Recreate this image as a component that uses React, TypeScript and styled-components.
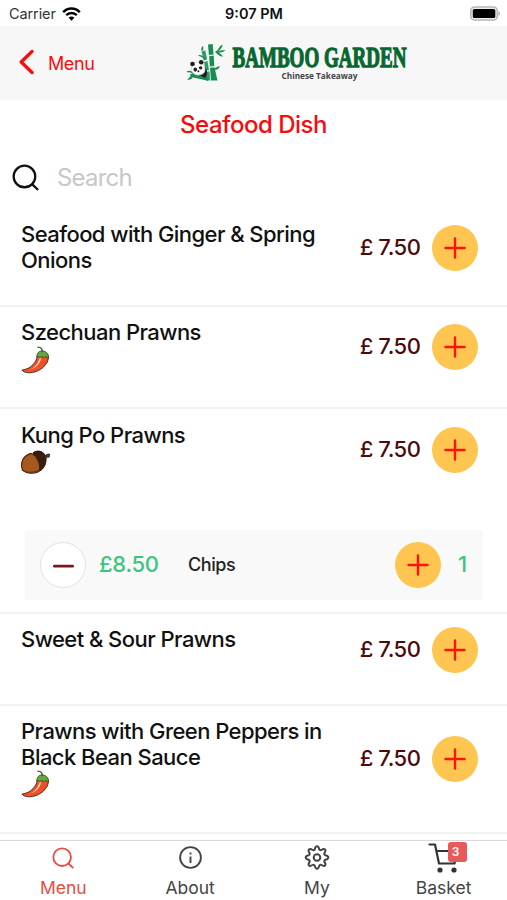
import React from 'react';
import styled, { createGlobalStyle } from 'styled-components';

const GlobalStyle = createGlobalStyle`
  * { box-sizing: border-box; }
  body { margin: 0; background: #fff; font-family: Inter, "Liberation Sans", sans-serif; color: #111; }
  button, input { font: inherit; border: 0; padding: 0; background: none; }
`;

const Screen = styled.div`
  width: 507px;
  height: 900px;
  display: flex;
  flex-direction: column;
  overflow: hidden;
  background: #fff;
`;

const StatusBar = styled.header`
  flex: none;
  height: 26px;
  padding: 0 7px 0 9px;
  display: grid;
  grid-template-columns: 1fr auto 1fr;
  align-items: center;
  font-size: 14.5px;
  line-height: 26px;
`;

const Carrier = styled.div`
  display: flex;
  align-items: center;
  gap: 6px;
  color: #333;
  letter-spacing: -0.1px;
`;

const Clock = styled.div`
  padding-top: 1px;
  margin-left: -1px;
  font-weight: 600;
  font-size: 14.5px;
`;

const BatterySlot = styled.div`
  display: flex;
  justify-content: flex-end;
`;

const NavBar = styled.nav`
  flex: none;
  height: 74px;
  display: flex;
  align-items: center;
  padding: 0 12px 0 19px;
  background: #f7f7f7;
`;

const BackButton = styled.button`
  display: flex;
  align-items: center;
  gap: 14px;
  width: 167px;
  color: #fb0d0d;
  font-size: 18px;
  letter-spacing: -0.4px;
  svg { margin-top: -3px; }
`;

const Title = styled.h1`
  flex: none;
  margin: 0;
  height: 49px;
  line-height: 49px;
  text-align: center;
  font-size: 24px;
  font-weight: 450;
  letter-spacing: -0.5px;
  color: #f70b0b;
`;

const SearchBar = styled.label`
  flex: none;
  height: 56px;
  display: flex;
  align-items: center;
  gap: 18px;
  padding-left: 12px;
`;

const SearchInput = styled.input`
  width: 300px;
  outline: none;
  font-size: 24px;
  letter-spacing: -0.8px;
  &::placeholder { color: #c7c7c9; opacity: 1; }
`;

const List = styled.main`
  flex: none;
  height: 635px;
  overflow: hidden;
`;

const Item = styled.section<{ $height: number; $top: number }>`
  height: ${p => p.$height}px;
  padding: ${p => p.$top}px 24px 0 21px;
  border-bottom: 2px solid #f1f1f1;
`;

const ItemMain = styled.div`
  display: flex;
  align-items: center;
  padding-right: 5.5px;
`;

const ItemInfo = styled.div`
  align-self: flex-start;
  flex: 1;
`;

const ItemName = styled.h2`
  margin: 0;
  font-size: 22px;
  line-height: 25.5px;
  font-weight: 500;
  letter-spacing: -0.55px;
  white-space: pre-line;
`;

const Tag = styled.div`
  height: 29px;
  margin-left: -1px;
  svg { display: block; }
`;

const Price = styled.span`
  margin: -2px 11px 0 0;
  color: #4d0a0c;
  font-size: 22px;
  font-weight: 500;
  letter-spacing: -0.45px;
  white-space: nowrap;
`;

const RoundButton = styled.button<{ $plain?: boolean }>`
  flex: none;
  display: grid;
  place-items: center;
  width: 46px;
  height: 46px;
  border-radius: 50%;
  background: ${p => (p.$plain ? '#fff' : '#fec550')};
  border: ${p => (p.$plain ? '1.5px solid #e3e3e3' : '0')};
`;

const Selection = styled.div`
  display: flex;
  align-items: center;
  height: 70px;
  margin: 52px 0 0 4px;
  padding: 0 15px;
  background: #f9f9f9;
  color: #3dc57d;
  font-size: 22px;
  font-weight: 450;
`;

const SelectionPrice = styled.span`
  width: 89px;
  margin: -2px 0 0 13px;
  letter-spacing: -0.3px;
`;

const SelectionName = styled.span`
  flex: 1;
  color: #222;
  font-size: 18px;
  letter-spacing: -0.4px;
`;

const Quantity = styled.span`
  width: 27px;
  margin-top: -2px;
  padding-left: 17px;
  font-weight: 500;
`;

const TabBar = styled.footer`
  flex: none;
  height: 60px;
  display: grid;
  grid-template-columns: repeat(4, 1fr);
  border-top: 1px solid #d9d9d9;
  background: #fff;
`;

const Tab = styled.button<{ $active?: boolean }>`
  display: flex;
  flex-direction: column;
  align-items: center;
  color: ${p => (p.$active ? '#eb4b43' : '#444')};
  font-size: 17.5px;
  line-height: 25px;
`;

const TabIcon = styled.span`
  position: relative;
  height: 34px;
  display: grid;
  place-items: center;
`;

const Badge = styled.span`
  position: absolute;
  top: 1px;
  left: 20px;
  width: 19px;
  height: 20px;
  border-radius: 3px;
  background: #e65a5a;
  color: #fff;
  text-align: center;
  padding-right: 3px;
  font-size: 12px;
  font-weight: 600;
  line-height: 20px;
`;

const Plus = () => (
  <svg width="22" height="22" viewBox="0 0 22 22" stroke="#ff1208" strokeWidth="2.4" strokeLinecap="round">
    <path d="M1.5 11h19M11 1.5v19" />
  </svg>
);

const Minus = () => (
  <svg width="22" height="22" viewBox="0 0 22 22" stroke="#761a1e" strokeWidth="2.8" strokeLinecap="round">
    <path d="M2.4 12.2h18.2" />
  </svg>
);

const Magnifier = ({ size, weight }: { size: number; weight: number }) => (
  <svg width={size} height={size} viewBox="0 0 26 26" fill="none" stroke="currentColor" strokeWidth={weight} strokeLinecap="round">
    <circle cx="12" cy="12" r="10.4" />
    <path d="M19.800 19.800l4.700 4.500" />
  </svg>
);

const Wifi = () => (
  <svg width="19" height="14" viewBox="0 0 19 14" fill="none" stroke="#000" strokeWidth="2.4">
    <path d="M1.2 5.2C5.6.2 13.4.2 17.8 5.2" />
    <path d="M4.2 8.2c3-3 7.6-3 10.6 0" />
    <path d="M6.6 10.7c1.7-1.5 4.1-1.5 5.8 0L9.5 13.8z" fill="#000" stroke="none" />
  </svg>
);

const Battery = () => (
  <svg width="31" height="15" viewBox="0 0 31 15">
    <rect x="1.800" y="1" width="26.5" height="13" rx="3.8" fill="#eee" stroke="#b8b8b8" strokeWidth="1.6" />
    <rect x="3.800" y="3" width="22.5" height="9" rx="1.6" fill="#000" />
    <path d="M29.500 5.2c2 .8 2 3.8 0 4.6z" fill="#aaa" />
  </svg>
);

const Chili = () => (
  <svg width="30" height="30" viewBox="0 0 30 30" strokeLinejoin="round" strokeLinecap="round">
    <path d="M17.8 9.2c-1.5 7-6.3 13.600-15.800 14.900 1.800 2.700 7.300 3.400 12.300 2C22.600 23.700 29.500 16.800 28.300 9.700z" fill="#f25022" stroke="#4a3029" strokeWidth="1" />
    <path d="M19.800 11.800c-1.600 5.800-4.700 9.500-9.800 12 5-1.500 9.400-5 11-11z" fill="#fff" opacity=".85" />
    <path d="M16.800 10.800c.2-4.200 2.600-6.200 6-5.900 3.400.4 6 2.900 5.500 7.200-1.700-1.700-3.500-1.700-4.700-.2-1.200-1.900-2.600-1.800-3.700-.2-.9-1.200-1.900-1.500-3.100-.9z" fill="#65a83a" stroke="#36502a" strokeWidth=".9" />
    <path d="M22.400 5c-.2-2-1.800-3.500-4.500-3.800" fill="none" stroke="#3f5336" strokeWidth="1.300" />
  </svg>
);

const Acorn = () => (
  <svg width="31" height="28" viewBox="0 0 31 28" strokeLinejoin="round">
    <g transform="translate(0 -.8)">
      <path d="M13 4.700C17.700.9 25 3.400 25.900 9.500c.8 5.200-1.800 11.300-6.500 13.500z" fill="#3b1d0e" stroke="#1f120b" />
      <path d="M24.800 8.200c1.300-1.900 2.700-2.700 5-2.200l-.6 3.100c-1.500-.6-2.500.2-3.400 1.700z" fill="#493728" stroke="#241b14" strokeWidth=".7" />
      <path d="M11.200 5.200C16 6.800 21 14.500 19.300 22.300c-1 2.100-4.200 2.800-8.200 2.700-3.700-.2-6.500-1.100-8.700-3.200C-.2 13.500 3.300 7.600 11.200 5.200z" fill="#a6581e" stroke="#3a2112" strokeWidth="1.100" />
      <path d="M3 22c4.500 2 11.500 2 15.600-.9-.8 3-4.500 4-8.100 3.700C7.300 24.600 4.600 23.700 3 22z" fill="#763811" />
    </g>
  </svg>
);

const Info = () => (
  <svg width="24" height="24" viewBox="0 0 24 24" fill="none" stroke="currentColor" strokeWidth="1.900">
    <circle cx="12.500" cy="11.500" r="10.400" />
    <path d="M12.500 10.500V17M12.500 6.500v2" />
  </svg>
);

const Gear = () => (
  <svg width="26" height="26" viewBox="0 0 26 26" fill="none" stroke="currentColor" strokeWidth="2" strokeLinejoin="round">
    <g transform="translate(0 -.5)">
      <circle cx="13" cy="13" r="3.300" />
      <path d="M10.800 4.600C11.300 2.400 12 1.700 13 1.700s1.700.7 2.200 2.900c.3 1 1.300 1.400 2.200.9 1.900-1.200 2.900-1.200 3.600-.5s.7 1.700-.5 3.600c-.5.9-.1 1.900.9 2.200 2.200.5 2.900 1.200 2.900 2.200s-.7 1.700-2.900 2.200c-1 .3-1.400 1.300-.9 2.200 1.200 1.900 1.200 2.900.5 3.600s-1.700.7-3.600-.5c-.9-.5-1.900-.1-2.200.9-.5 2.200-1.200 2.900-2.200 2.900s-1.700-.7-2.200-2.900c-.3-1-1.300-1.400-2.200-.9-1.900 1.200-2.900 1.200-3.600.5s-.7-1.700.5-3.600c.5-.9.1-1.900-.9-2.200C2.400 14.700 1.700 14 1.700 13s.7-1.700 2.900-2.200c1-.3 1.400-1.300.9-2.200C4.300 6.700 4.300 5.700 5 5s1.700-.7 3.600.5c.9.5 1.900.1 2.200-.9z" />
    </g>
  </svg>
);

const Cart = () => (
  <svg width="32" height="32" viewBox="0 0 32 32" fill="none" stroke="#333" strokeWidth="2.200" strokeLinecap="round" strokeLinejoin="round">
    <path d="M1.500 2.500h5.500L11 21.500h15.500l3-12.500H8.500" />
    <circle cx="12" cy="28" r="2.600" fill="#333" stroke="none" />
    <circle cx="26" cy="28" r="2.600" fill="#333" stroke="none" />
  </svg>
);

const Logo = () => (
  <svg width="232" height="42" viewBox="0 0 232 42" aria-label="Bamboo Garden">
    <g fill="#169052">
      <path d="M22 2.500l4.700-.5.800 10.500-4.600.6zM23.200 14.200l4.500-.6.600 10.500-4.500.5zM24 25.800l4.500-.5 3 13.200H25z" />
      <path d="M15.500 9.500l3.700-1.200 2 9.200-3.500 1zM18 20l3.500-1 1.500 9-3.400.7zM20 30l3.400-.7.800 9.200H20z" opacity=".9" />
      <path d="M4 32.500l4-2 14 5v3.300L5 35z" />
      <path d="M29 10c3.500-1.500 4-6 7.500-7.500-.2 3-1.700 5-4.200 6.500 3.200-1.200 4.700-.4 7.200-1-2.500 2.600-6 2.700-8 2.200 3 .8 4.200 2.400 5.300 4.600C33.500 14.500 32 12.500 29 10zM18 17c-3-3-5-2.500-6-4 3-.6 6 1 7 4zM15.500 9c-.5-3 0-4 1.500-5 .8 2 .4 4-1 5zM28 27c3-3 5-2 6-3-1 3-3 4-6 4zM6 31c-3-1-4 0-5.500-1.500 3-1.700 6-.5 7 1.500zM6 34c-3 .3-3 3-5 3.500 3 .8 5.500-.6 6-3.500z" />
    </g>
    <circle cx="12" cy="26.500" r="6.700" fill="#fff" stroke="#aaa" strokeWidth=".4" />
    <g fill="#202020">
      <circle cx="6.500" cy="22" r="2.300" />
      <circle cx="15.200" cy="20.300" r="2.300" />
      <ellipse cx="9.300" cy="27.600" rx="1.800" ry="2.100" />
      <ellipse cx="14.600" cy="25.800" rx="1.800" ry="1.600" />
      <circle cx="12.400" cy="29.300" r="1" />
      <path d="M14 33c4-.5 5.600-3 5.500-7.500 2.500 4 2 9-1 10.500z" />
    </g>
    <text x="46.500" y="25.200" textLength="174" lengthAdjust="spacingAndGlyphs" fontFamily="Liberation Serif, serif" fontWeight="700" fontSize="30" fill="#086630" stroke="#086630" strokeWidth="1.300">BAMBOO GARDEN</text>
    <text x="95.500" y="36.500" textLength="76" lengthAdjust="spacingAndGlyphs" fontFamily="Open Sans, sans-serif" fontWeight="700" fontSize="9" fill="#444">Chinese Takeaway</text>
  </svg>
);

type Dish = { name: string; height: number; top: number; icon?: React.ReactNode; chips?: boolean };

const dishes: Dish[] = [
  { name: 'Seafood with Ginger & Spring\nOnions', height: 102, top: 17 },
  { name: 'Szechuan Prawns', height: 102, top: 13, icon: <Chili /> },
  { name: 'Kung Po Prawns', height: 205, top: 14, icon: <Acorn />, chips: true },
  { name: 'Sweet & Sour Prawns', height: 92, top: 13 },
  { name: 'Prawns with Green Peppers in\nBlack Bean Sauce', height: 128, top: 13, icon: <Chili /> },
];

export default function App() {
  return (
    <Screen>
      <GlobalStyle />
      <StatusBar>
        <Carrier>Carrier <Wifi /></Carrier>
        <Clock>9:07 PM</Clock>
        <BatterySlot><Battery /></BatterySlot>
      </StatusBar>
      <NavBar>
        <BackButton>
          <svg width="15" height="26" viewBox="0 0 15 26" fill="none" stroke="currentColor" strokeWidth="3.3" strokeLinecap="round" strokeLinejoin="round">
            <path d="M13 2.500L2.200 13 13 23.500" />
          </svg>
          Menu
        </BackButton>
        <Logo />
      </NavBar>
      <Title>Seafood Dish</Title>
      <SearchBar>
        <Magnifier size={27} weight={2.2} />
        <SearchInput placeholder="Search" />
      </SearchBar>
      <List>
        {dishes.map(d => (
          <Item key={d.name} $height={d.height} $top={d.top}>
            <ItemMain>
              <ItemInfo>
                <ItemName>{d.name}</ItemName>
                {d.icon && <Tag>{d.icon}</Tag>}
              </ItemInfo>
              <Price>£ 7.50</Price>
              <RoundButton aria-label="Add"><Plus /></RoundButton>
            </ItemMain>
            {d.chips && (
              <Selection>
                <RoundButton $plain aria-label="Remove"><Minus /></RoundButton>
                <SelectionPrice>£8.50</SelectionPrice>
                <SelectionName>Chips</SelectionName>
                <RoundButton aria-label="Add"><Plus /></RoundButton>
                <Quantity>1</Quantity>
              </Selection>
            )}
          </Item>
        ))}
      </List>
      <TabBar>
        <Tab $active><TabIcon><Magnifier size={22} weight={2.2} /></TabIcon>Menu</Tab>
        <Tab><TabIcon><Info /></TabIcon>About</Tab>
        <Tab><TabIcon><Gear /></TabIcon>My</Tab>
        <Tab><TabIcon><Cart /><Badge>3</Badge></TabIcon>Basket</Tab>
      </TabBar>
    </Screen>
  );
}
